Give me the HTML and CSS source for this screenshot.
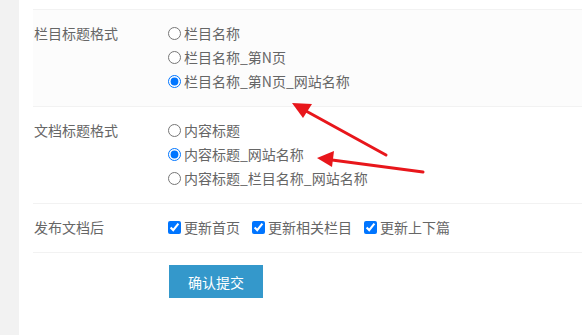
FILE: index.html
```html
<!DOCTYPE html>
<html lang="zh-CN">
<head>
<meta charset="utf-8">
<link rel="stylesheet" href="styles.css">
</head>
<body>
<div class="card">
  <div class="form">
    <div class="row row-hover">
      <div class="label">栏目标题格式</div>
      <div class="field">
        <label class="opt"><input type="radio" name="lm">栏目名称</label>
        <label class="opt"><input type="radio" name="lm">栏目名称_第N页</label>
        <label class="opt"><input type="radio" name="lm" checked>栏目名称_第N页_网站名称</label>
      </div>
    </div>
    <div class="row">
      <div class="label">文档标题格式</div>
      <div class="field">
        <label class="opt"><input type="radio" name="wd">内容标题</label>
        <label class="opt"><input type="radio" name="wd" checked>内容标题_网站名称</label>
        <label class="opt"><input type="radio" name="wd">内容标题_栏目名称_网站名称</label>
      </div>
    </div>
    <div class="row">
      <div class="label">发布文档后</div>
      <div class="field inline">
        <label class="opt"><input type="checkbox" checked>更新首页</label>
        <label class="opt"><input type="checkbox" checked>更新相关栏目</label>
        <label class="opt"><input type="checkbox" checked>更新上下篇</label>
      </div>
    </div>
    <div class="actions">
      <button class="btn" type="button">确认提交</button>
    </div>
  </div>
  <svg class="arrows" width="582" height="335" viewBox="0 0 582 335">
    <line x1="386" y1="155" x2="306" y2="111" stroke="#e8161b" stroke-width="3" stroke-linecap="round"/>
    <polygon points="292,103 312,104 303,118" fill="#e8161b"/>
    <line x1="423" y1="172" x2="332" y2="160" stroke="#e8161b" stroke-width="3" stroke-linecap="round"/>
    <polygon points="317,158 334,151 332,167" fill="#e8161b"/>
  </svg>
</div>
</body>
</html>
```
FILE: styles.css
```css
html, body {
  margin: 0;
  padding: 0;
  height: 100%;
}
body {
  background: #f2f2f2;
  font-family: "Noto Sans CJK SC", "Microsoft YaHei", sans-serif;
  font-size: 14px;
  color: #666;
  overflow: hidden;
}
.card {
  margin-left: 19px;
  background: #fff;
  height: 100%;
  padding-top: 9px;
  box-sizing: border-box;
}
.form {
  padding-left: 14px;
}
.row {
  display: flex;
  padding: 11px 0 13px;
  border-bottom: 1px solid #f2f2f2;
}
.row-hover {
  background: #fcfcfc;
  border-top: 1px solid #f2f2f2;
}
.label {
  width: 135px;
  flex: none;
  line-height: 24px;
  padding-left: 1px;
  box-sizing: border-box;
  color: #666;
}
.field {
  display: flex;
  flex-direction: column;
}
.field.inline {
  flex-direction: row;
  gap: 12px;
}
.opt {
  display: flex;
  align-items: center;
  height: 24px;
  line-height: 24px;
  color: #666;
  white-space: nowrap;
}
.opt input {
  margin: 0 3px 0 0;
  width: 13px;
  height: 13px;
  flex: none;
}
.actions {
  padding: 12px 0 0 135px;
}
.btn {
  width: 94px;
  height: 33px;
  border: none;
  background: #3498cb;
  color: #fff;
  font-family: "Noto Sans CJK SC", "Microsoft YaHei", sans-serif;
  font-size: 14px;
  padding: 0;
  margin-left: 1px;
}
.arrows {
  position: absolute;
  left: 0;
  top: 0;
  pointer-events: none;
}
```
